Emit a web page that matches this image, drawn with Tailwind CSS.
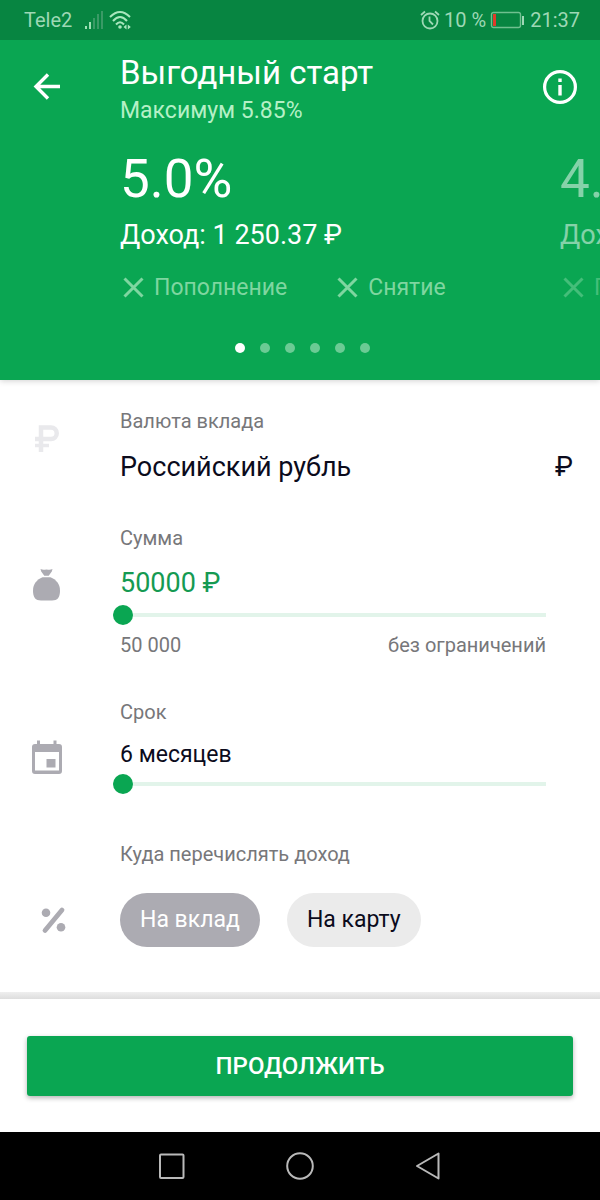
<!DOCTYPE html>
<html lang="ru">
<head>
<meta charset="utf-8">
<meta name="viewport" content="width=device-width, initial-scale=1">
<title>Выгодный старт</title>
<script src="https://cdn.jsdelivr.net/npm/@tailwindcss/browser@4"></script>
</head>
<body class="flex min-h-screen flex-col overflow-x-hidden bg-white font-['Roboto',sans-serif] text-[#0b0b1c]">

<div class="relative z-10 flex h-10 items-center justify-between bg-[#078541] pr-5 pl-6 text-xl text-[#9ed8b5]">
  <div class="flex items-center">
    <span>Tele2</span>
    <svg class="ml-3 h-5 w-5" viewBox="0 0 20 20" aria-hidden="true">
      <path fill="#9ee0b4" d="M1 16h2v3H1zM5 12h2v7H5z"/>
      <path fill="#3a9a66" d="M9 8h2v11H9zM13 4h2v15h-2zM17 1h2v18h-2z"/>
    </svg>
    <svg class="ml-1 h-5 w-6" viewBox="0 0 24 20" fill="none" stroke="#a9e6bd" stroke-width="2" aria-hidden="true">
      <path d="M2 7Q12-3 22 7M5 11Q12 3 19 11M8 14.500Q12 10 16 14.500"/>
      <circle cx="12" cy="17" r="1.800" fill="#a9e6bd" stroke="none"/>
      <path fill="#a9e6bd" stroke="none" d="M18.500 14.500v5l-3-2.500zM19.800 14.500v5l3-2.500z"/>
    </svg>
  </div>
  <div class="flex items-center">
    <svg class="h-5 w-5" viewBox="0 0 20 20" fill="none" stroke="currentColor" stroke-width="1.800" aria-hidden="true">
      <circle cx="10" cy="11" r="7.500"/>
      <path d="M9.500 6.500V11l3.500 3.500M1 5l4-3.500M19 5l-4-3.500"/>
    </svg>
    <span class="ml-1">10 %</span>
    <svg class="ml-1 h-[18px] w-9" viewBox="0 0 36 18" fill="none" aria-hidden="true">
      <rect x="1.500" y="1.500" width="29" height="15" rx="2" stroke="#6fc08f" stroke-width="1.400"/>
      <path fill="#e23b2a" d="M3 3h3v12H3z"/>
      <path fill="#9ed8b5" d="M32 5h2v9h-2z"/>
    </svg>
    <span class="ml-1">21:37</span>
  </div>
</div>

<header class="bg-[#0aa652] pb-[27px] text-white shadow-[0_1px_6px_rgba(0,0,0,0.18)]">
  <div class="flex pt-[13px]">
    <div class="w-[120px] shrink-0 pt-[18px] pl-8">
      <button type="button" aria-label="Назад" class="block">
        <svg class="h-8 w-8" viewBox="0 0 32 32" fill="none" stroke="currentColor" stroke-width="3.400" aria-hidden="true"><path d="M28 15.500H4M16 3.500L4 15.500l12 12"/></svg>
      </button>
    </div>
    <div class="flex-1">
      <h1 class="text-[33px] leading-10">Выгодный старт</h1>
      <p class="text-[23px] leading-9 text-[#b5f0c6]">Максимум 5.85%</p>
    </div>
    <div class="pt-4 pr-[22px]">
      <button type="button" aria-label="Информация" class="block">
        <svg class="h-9 w-9" viewBox="0 0 36 36" aria-hidden="true">
          <circle cx="18" cy="18" r="15.400" fill="none" stroke="currentColor" stroke-width="3.200"/>
          <path fill="currentColor" d="M16.300 9.500h3.400v3.400h-3.400zM16.300 16h3.400v10.500h-3.400z"/>
        </svg>
      </button>
    </div>
  </div>

  <div class="flex overflow-hidden pt-[18px] pl-[120px]">
    <article class="w-[440px] shrink-0">
      <p class="text-[53px] leading-[64px]">5.0%</p>
      <p class="pt-[6px] text-[27px] leading-9">Доход: 1 250.37 ₽</p>
      <ul class="flex gap-[47px] pt-[19px] text-[23px] leading-8 text-[#7fd6a0]">
        <li class="flex items-center gap-2"><svg class="h-[26px] w-[26px]" viewBox="0 0 26 26" fill="none" stroke="currentColor" stroke-width="3" aria-hidden="true"><path d="M4.500 3.500l18 18M22.500 3.500l-18 18"/></svg>Пополнение</li>
        <li class="flex items-center gap-2"><svg class="h-[26px] w-[26px]" viewBox="0 0 26 26" fill="none" stroke="currentColor" stroke-width="3" aria-hidden="true"><path d="M4.500 3.500l18 18M22.500 3.500l-18 18"/></svg>Снятие</li>
      </ul>
    </article>
    <article class="w-[440px] shrink-0 opacity-50">
      <p class="text-[53px] leading-[64px]">4.5%</p>
      <p class="pt-[6px] text-[27px] leading-9">Доход</p>
      <ul class="flex gap-[47px] pt-[19px] text-[23px] leading-8 text-[#7fd6a0]">
        <li class="flex items-center gap-2"><svg class="h-[26px] w-[26px]" viewBox="0 0 26 26" fill="none" stroke="currentColor" stroke-width="3" aria-hidden="true"><path d="M4.500 3.500l18 18M22.500 3.500l-18 18"/></svg>Пополнение</li>
      </ul>
    </article>
  </div>

  <div class="flex justify-center gap-[15px] pt-[39px] pl-1">
    <span class="size-[10px] rounded-full bg-white"></span>
    <span class="size-[10px] rounded-full bg-[#6bcb94]"></span>
    <span class="size-[10px] rounded-full bg-[#6bcb94]"></span>
    <span class="size-[10px] rounded-full bg-[#6bcb94]"></span>
    <span class="size-[10px] rounded-full bg-[#6bcb94]"></span>
    <span class="size-[10px] rounded-full bg-[#6bcb94]"></span>
  </div>
</header>

<main class="flex-1 pb-[45px]">
  <section class="flex pt-[29px]">
    <div class="w-[120px] shrink-0 pt-[14px] pl-8">
      <svg class="h-8 w-7" viewBox="0 0 28 32" fill="none" stroke="#e9e9ec" aria-hidden="true"><path stroke-width="4.500" d="M9 29V4.500h10a5.300 5.300 0 0 1 0 11.500H3"/><path stroke-width="3.500" d="M3 22.500h14"/></svg>
    </div>
    <div class="flex-1 pr-[27px]">
      <p id="currency-label" class="text-xl leading-6 text-[#77777a]">Валюта вклада</p>
      <button type="button" aria-describedby="currency-label" class="mt-4 flex w-full justify-between text-left text-[27px] leading-9"><span>Российский рубль</span><span>₽</span></button>
    </div>
  </section>

  <section class="flex pt-[41px]">
    <div class="w-[120px] shrink-0 pt-[42px] pl-8">
      <svg class="h-[34px] w-[30px]" viewBox="0 0 30 34" fill="#acabb2" aria-hidden="true">
        <path d="M8.500 1c2 .9 3.500.7 6 .4 2.500.3 4 .5 6-.4l-.7 2.500-3.100 4.200h-4.400L9.200 3.500z"/>
        <path d="M10.500 9.300h8C24 11.500 28 16 28 22.500c0 7-2.500 10-8 10H9c-5.500 0-8-3-8-10 0-6.500 4-11 9.500-13.200z"/>
      </svg>
    </div>
    <div class="flex-1 pr-[54px]">
      <label for="amount" class="block text-xl leading-6 text-[#77777a]">Сумма</label>
      <output for="amount" class="mt-[15px] block text-[27px] leading-9 text-[#159a52]">50000 ₽</output>
      <div class="-ml-[7px] pt-1">
        <input id="amount" type="range" min="50000" max="1000000" value="50000" class="block h-5 w-full appearance-none bg-transparent [&::-webkit-slider-runnable-track]:h-1 [&::-webkit-slider-runnable-track]:bg-[#e2f4ea] [&::-webkit-slider-thumb]:-mt-2 [&::-webkit-slider-thumb]:size-5 [&::-webkit-slider-thumb]:appearance-none [&::-webkit-slider-thumb]:rounded-full [&::-webkit-slider-thumb]:bg-[#0aa652]">
      </div>
      <div class="flex justify-between pt-2 text-xl leading-6 text-[#77777a]"><span>50 000</span><span>без ограничений</span></div>
    </div>
  </section>

  <section class="flex pt-[43px]">
    <div class="w-[120px] shrink-0 pt-[39px] pl-[31px]">
      <svg class="h-9 w-8" viewBox="0 0 32 36" aria-hidden="true">
        <path fill="#acabb2" fill-rule="evenodd" d="M6 1.500h3V5h13.500V1.500h3V5H28a3 3 0 0 1 3 3v24a3 3 0 0 1-3 3H4a3 3 0 0 1-3-3V8a3 3 0 0 1 3-3h2zM4 13v18.500h24V13zM15.500 20h9v8.500h-9z"/>
      </svg>
    </div>
    <div class="flex-1 pr-[54px]">
      <label for="term" class="block text-xl leading-6 text-[#77777a]">Срок</label>
      <output for="term" class="mt-[13px] block text-[23px] leading-9">6 месяцев</output>
      <div class="-ml-[7px] pt-px">
        <input id="term" type="range" min="6" max="36" value="6" class="block h-5 w-full appearance-none bg-transparent [&::-webkit-slider-runnable-track]:h-1 [&::-webkit-slider-runnable-track]:bg-[#e2f4ea] [&::-webkit-slider-thumb]:-mt-2 [&::-webkit-slider-thumb]:size-5 [&::-webkit-slider-thumb]:appearance-none [&::-webkit-slider-thumb]:rounded-full [&::-webkit-slider-thumb]:bg-[#0aa652]">
      </div>
    </div>
  </section>

  <section class="flex pt-12">
    <div class="w-[120px] shrink-0 pt-[64px] pl-10">
      <svg class="h-7 w-[26px]" viewBox="0 0 26 28" fill="#acabb2" aria-hidden="true">
        <circle cx="6" cy="6.700" r="4.300"/><circle cx="21" cy="21.300" r="4.300"/>
        <path d="M22 4L5 24.500" stroke="#acabb2" stroke-width="4.800" stroke-linecap="round"/>
      </svg>
    </div>
    <fieldset class="flex-1">
      <legend class="text-xl leading-6 text-[#77777a]">Куда перечислять доход</legend>
      <div class="flex gap-[27px] pt-[27px] text-[23px] leading-[54px]">
        <label class="cursor-pointer rounded-full bg-[#ebebeb] px-5 has-checked:bg-[#acabb2] has-checked:text-white"><input type="radio" name="payout" value="deposit" class="sr-only" checked>На вклад</label>
        <label class="cursor-pointer rounded-full bg-[#ebebeb] px-5 has-checked:bg-[#acabb2] has-checked:text-white"><input type="radio" name="payout" value="card" class="sr-only">На карту</label>
      </div>
    </fieldset>
  </section>
</main>

<footer>
  <div class="h-[7px] bg-linear-to-b from-[#efefef] to-[#dddddd]"></div>
  <div class="px-[27px] pt-[37px] pb-9">
    <button type="button" class="block h-[60px] w-full rounded-[3px] bg-[#0aa652] text-2xl font-medium text-white shadow-[0_2px_5px_rgba(0,0,0,0.3)]">ПРОДОЛЖИТЬ</button>
  </div>
</footer>

<nav class="flex h-[68px] items-center justify-center gap-[98px] bg-black text-[#b9b9b9]" aria-label="Системная навигация">
  <button type="button" aria-label="Недавние"><svg class="block size-[30px]" viewBox="0 0 30 30" fill="none" stroke="currentColor" stroke-width="2" aria-hidden="true"><rect x="3" y="3.500" width="23.500" height="23.500" rx="1"/></svg></button>
  <button type="button" aria-label="Домой"><svg class="block size-[30px]" viewBox="0 0 30 30" fill="none" stroke="currentColor" stroke-width="2" aria-hidden="true"><circle cx="15" cy="15" r="12.800"/></svg></button>
  <button type="button" aria-label="Назад"><svg class="block size-[30px]" viewBox="0 0 30 30" fill="none" stroke="currentColor" stroke-width="2" stroke-linejoin="round" aria-hidden="true"><path d="M25.500 2.500v25L4 15z"/></svg></button>
</nav>

</body>
</html>
